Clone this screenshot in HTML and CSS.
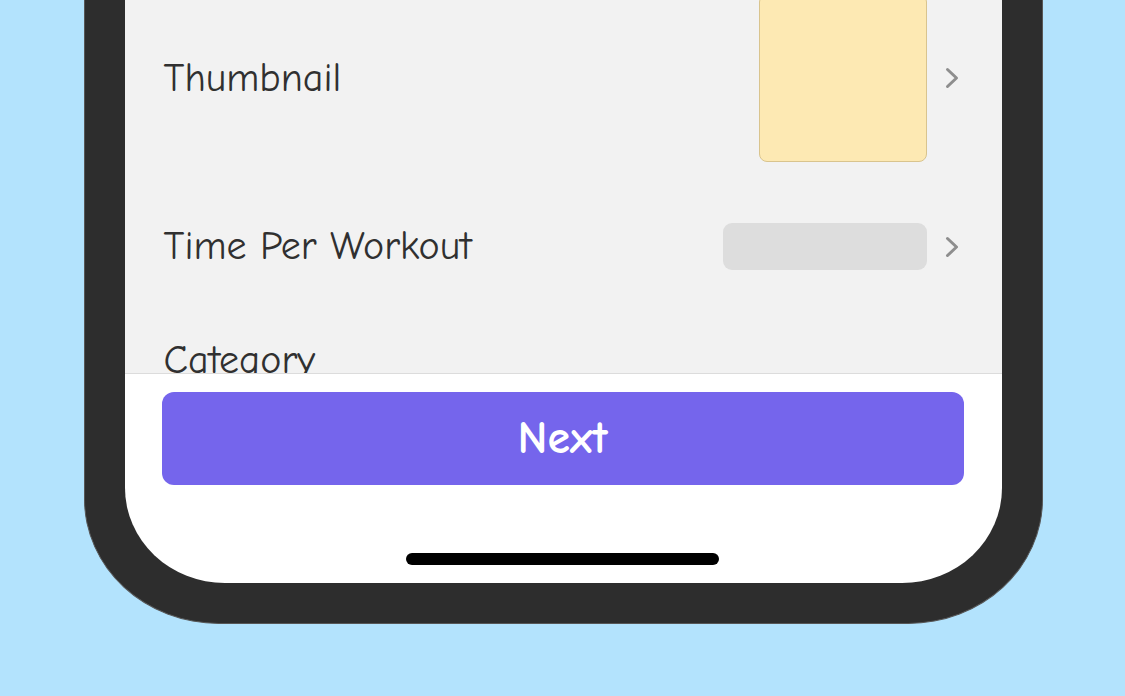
FILE: index.html
```html
<!DOCTYPE html>
<html>
<head>
<meta charset="utf-8">
<link rel="stylesheet" href="styles.css">
</head>
<body>
<div class="phone">
  <div class="screen">
    <div class="content">
      <div class="list">
        <div class="row">
          <span class="label">Thumbnail</span>
          <div class="value">
            <div class="thumb"></div>
            <svg class="chev" width="14" height="22" viewBox="0 0 14 22"><polyline points="2.5,2.5 11.5,11 2.5,19.5" fill="none" stroke="#8e8e8e" stroke-width="3" stroke-linecap="round" stroke-linejoin="round"/></svg>
          </div>
        </div>
        <div class="row">
          <span class="label">Time Per Workout</span>
          <div class="value">
            <div class="pill"></div>
            <svg class="chev" width="14" height="22" viewBox="0 0 14 22"><polyline points="2.5,2.5 11.5,11 2.5,19.5" fill="none" stroke="#8e8e8e" stroke-width="3" stroke-linecap="round" stroke-linejoin="round"/></svg>
          </div>
        </div>
        <div class="row row-last">
          <span class="label">Category</span>
        </div>
      </div>
    </div>
    <div class="footer">
      <button class="next">Next</button>
      <div class="home"></div>
    </div>
  </div>
</div>
</body>
</html>
```
FILE: styles.css
```css
html, body {
  margin: 0;
  padding: 0;
}
body {
  background: #b3e3fd;
  height: 696px;
  overflow: hidden;
  font-family: "Comic Sans MS", "Comic Neue", "Noto Sans", sans-serif;
}
.phone {
  margin-left: 84px;
  width: 959px;
  height: 624px;
  box-sizing: border-box;
  background: #2d2d2d;
  border: 1.5px solid #575757;
  border-top: none;
  border-radius: 0 0 135px 135px / 0 0 125px 125px;
  padding: 0 39px 39px 39.5px;
}
.screen {
  width: 877px;
  height: 583px;
  background: #fff;
  border-radius: 0 0 100px 100px / 0 0 95px 95px;
  overflow: hidden;
  display: flex;
  flex-direction: column;
}
.content {
  flex: 1;
  background: #f2f2f2;
  overflow: hidden;
  padding: 0 43px 0 39px;
}
.list {
  margin-top: -6px;
  display: flex;
  flex-direction: column;
  gap: 61px;
}
.row {
  display: flex;
  align-items: center;
  justify-content: space-between;
}
.row-last {
  padding-top: 6px;
}
.label {
  font-size: 40px;
  color: #303030;
  line-height: 47px;
}
.value {
  display: flex;
  align-items: center;
  gap: 18px;
}
.thumb {
  width: 166px;
  height: 166px;
  background: #fde9b3;
  border: 1px solid #d9c48e;
  border-radius: 8px;
}
.pill {
  width: 204px;
  height: 47px;
  background: #dddddd;
  border-radius: 9px;
}
.chev {
  display: block;
}
.footer {
  border-top: 1px solid #dcdcdc;
  padding: 18px 38px 18px 37px;
  display: flex;
  flex-direction: column;
  align-items: center;
}
.next {
  width: 100%;
  height: 93px;
  border: none;
  border-radius: 12px;
  background: #7565ec;
  color: #fff;
  font-family: inherit;
  font-weight: bold;
  font-size: 46px;
}
.home {
  margin-top: 68px;
  width: 313px;
  height: 12px;
  border-radius: 6px;
  background: #000;
}
```
